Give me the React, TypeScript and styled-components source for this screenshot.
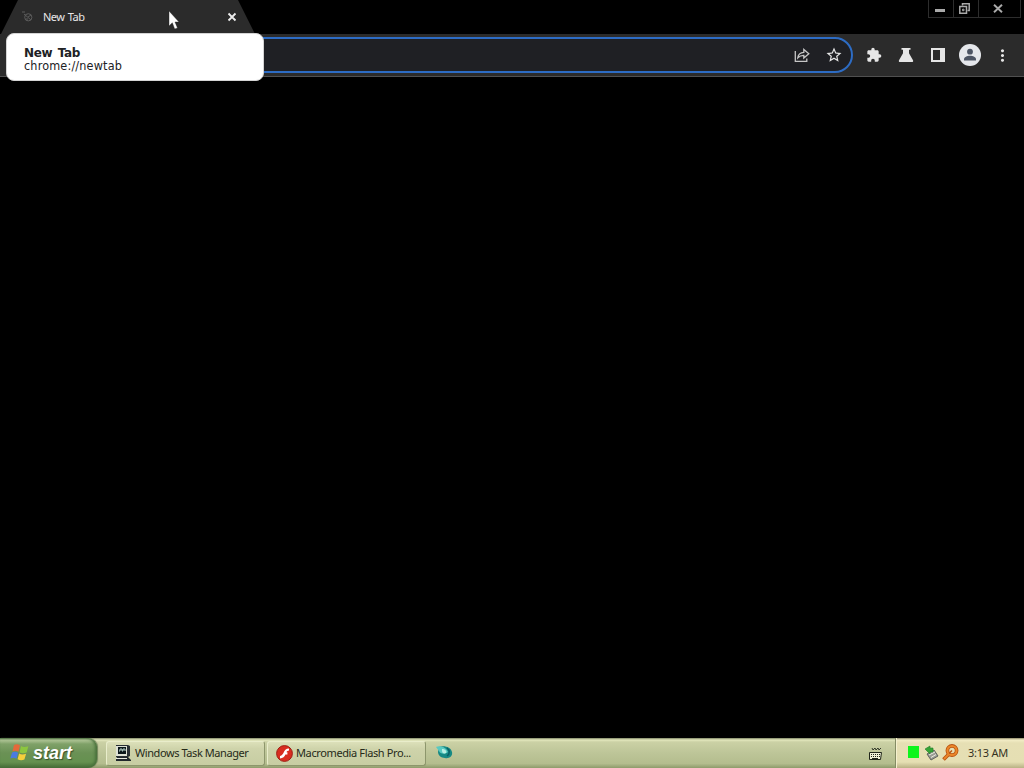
import React from 'react';
import styled, { createGlobalStyle } from 'styled-components';
import { MdExtension, MdMoreVert, MdStarBorder } from 'react-icons/md';

const GlobalStyle = createGlobalStyle`
  body {
    margin: 0;
    background: #000;
    overflow: hidden;
    font-family: 'DejaVu Sans Condensed', 'DejaVu Sans', sans-serif;
  }
`;

const Desktop = styled.div`
  position: relative;
  display: flex;
  flex-direction: column;
  width: 1024px;
  height: 768px;
  background: #000;
`;

const TabStrip = styled.header`
  display: flex;
  justify-content: space-between;
  align-items: flex-start;
  height: 34px;
  flex: none;
`;
const Tab = styled.div`
  display: flex;
  align-items: center;
  box-sizing: border-box;
  width: 255px;
  height: 34px;
  padding: 0 17px 0 21px;
  background: #2b2b2b;
  clip-path: polygon(18px 0, 238px 0, 255px 34px, 1px 34px);
`;
const TabTitle = styled.span`
  flex: 1;
  margin-left: 8px;
  color: #e8e8e8;
  font: 11px/14px 'Noto Sans', sans-serif;
  letter-spacing: -0.5px;
  word-spacing: 1px;
`;

const WindowControls = styled.div`
  display: flex;
  box-sizing: border-box;
  width: 93px;
  height: 18px;
  margin-right: 3px;
  border: 1px solid #2d2d2d;
  border-top: 0;
`;
const WindowButton = styled.div<{ $width: number }>`
  display: flex;
  justify-content: center;
  align-items: center;
  box-sizing: border-box;
  width: ${p => p.$width}px;
  padding-right: 3px;

  & + & {
    border-left: 1px solid #2d2d2d;
  }
`;

const Toolbar = styled.div`
  display: flex;
  align-items: center;
  box-sizing: border-box;
  height: 43px;
  flex: none;
  padding: 0 6px 0 104px;
  background: #2b2b2b;
  border-bottom: 1px solid #505050;
`;
const Omnibox = styled.div`
  display: flex;
  justify-content: flex-end;
  align-items: center;
  box-sizing: border-box;
  flex: 1;
  height: 36px;
  margin-right: 5px;
  padding-right: 1px;
  border: 2px solid #2d6cc4;
  border-radius: 18px;
  background: #1f2024;
`;
const IconButton = styled.div`
  display: flex;
  justify-content: center;
  align-items: center;
  width: 32px;
  height: 32px;
  color: #e6e6e6;
`;

const HoverCard = styled.div`
  position: absolute;
  top: 33px;
  left: 6px;
  box-sizing: border-box;
  width: 258px;
  height: 48px;
  padding: 13px 17px 0;
  border: 1px solid #d4d4d4;
  border-radius: 8px;
  background: #fff;
  color: #202124;
`;
const HoverTitle = styled.div`
  font: bold 12px/13px 'DejaVu Sans', sans-serif;
  letter-spacing: -0.4px;
  word-spacing: 2px;
`;
const HoverUrl = styled.div`
  font-size: 12.5px;
  line-height: 12px;
  letter-spacing: 0.17px;
`;
const Pointer = styled.svg`
  position: absolute;
  top: 10px;
  left: 168px;
`;

const Page = styled.main`
  flex: 1;
`;

const Taskbar = styled.footer`
  display: flex;
  box-sizing: border-box;
  height: 30px;
  flex: none;
  background: linear-gradient(#7f8766 0, #e3e7bd 2px, #cbd1a5 4px, #bdc598 50%, #b4bd8e 85%, #8e9b6b);
`;
const StartButton = styled.div`
  display: flex;
  align-items: center;
  box-sizing: border-box;
  width: 97px;
  height: 30px;
  padding: 0 0 1px 10px;
  border-radius: 0 9px 9px 0;
  background: linear-gradient(#56754a 0, #b0c596 2px, #7fa168 6px, #6a9155 50%, #65914f 80%, #446b36);
  box-shadow: inset -2px 0 3px #48703b, 1px 0 1px #718459;
`;
const StartLabel = styled.span`
  margin-left: 4px;
  color: #fff;
  font: italic bold 18px/20px 'Liberation Sans', sans-serif;
  letter-spacing: 0;
  text-shadow: 1px 1px 1px #36502c;
`;
const TaskList = styled.div`
  display: flex;
  flex: 1;
  align-items: center;
  gap: 2px;
  padding-left: 9px;
`;
const TaskButton = styled.div`
  display: flex;
  align-items: center;
  gap: 3px;
  box-sizing: border-box;
  width: 159px;
  height: 25px;
  margin-top: 1px;
  padding: 0 0 1px 8px;
  border: 1px solid #e9edcb;
  border-right-color: #8d966c;
  border-bottom-color: #8d966c;
  border-radius: 3px;
  background: linear-gradient(#dce0b9, #ced3aa 30%, #c7cda2);
`;
const TaskLabel = styled.span<{ $spacing: number }>`
  color: #262a18;
  font: 11px/14px 'Noto Sans', sans-serif;
  letter-spacing: ${p => p.$spacing}px;
  white-space: nowrap;
`;
const QuickIcon = styled.div`
  display: flex;
  margin-left: 8px;
`;
const LanguageBar = styled.div`
  display: flex;
  align-items: center;
  width: 27px;
  padding-top: 2px;
`;
const Tray = styled.div`
  display: flex;
  align-items: center;
  box-sizing: border-box;
  width: 129px;
  height: 30px;
  padding: 0 0 1px 12px;
  border-left: 1px solid #858c64;
  background: linear-gradient(#8d8968 0, #f2ecc5 2px, #e6dfb4 5px, #e5dfb3 80%, #b8b184);
  box-shadow: inset 1px 0 #f5f1cf;
`;
const StatusLight = styled.div`
  width: 11px;
  height: 12px;
  margin: -1px 5px 0 0;
  background: #0cf51c;
`;
const Clock = styled.span`
  margin-left: 9px;
  color: #35321f;
  font: 11px/14px 'Noto Sans', sans-serif;
  letter-spacing: -0.25px;
  white-space: nowrap;
`;

function TabIcon() {
  return (
    <svg width="14" height="14" viewBox="0 0 14 14" fill="none" stroke="#5c5c5c">
      <path d="M1 2h3M3 4l7 6" />
      <circle cx="7.3" cy="7.3" r="3.6" />
      <path d="M7 7l3-2M6 8v3" />
    </svg>
  );
}

function ShareIcon() {
  return (
    <svg width="16" height="16" viewBox="0 0 16 16" fill="none" stroke="#c6c6c6" strokeWidth="1.3">
      <path d="M1.3 4v10.3h11.5V11.5" />
      <path d="M3.8 10.8c.4-3.4 2.2-5.3 6-5.5V2.5l5 4.3-5 4.2V8.4c-2.7 0-4.4.7-6 2.4z" />
    </svg>
  );
}

function FlaskIcon() {
  return (
    <svg width="16" height="16" viewBox="0 0 16 16" fill="currentColor">
      <path d="M3.5 1h9v1.8H11v3.5l4 6.9c.5.9 0 1.8-1 1.8H2c-1 0-1.5-.9-1-1.8l4-6.9V2.8H3.5z" />
    </svg>
  );
}

function SidePanelIcon() {
  return (
    <svg width="14" height="14" viewBox="0 0 14 14">
      <path fill="#e6e6e6" fillRule="evenodd" d="M0 0h14v14H0zM2 2v10h7V2z" />
    </svg>
  );
}

function ProfileIcon() {
  return (
    <svg width="22" height="22" viewBox="0 0 22 22">
      <circle cx="11" cy="11" r="11" fill="#e5e7eb" />
      <circle cx="11" cy="7.7" r="2.9" fill="#4c5463" />
      <path d="M5 15.5c0-2.5 3-3.7 6-3.7s6 1.2 6 3.7v.9H5z" fill="#4c5463" />
    </svg>
  );
}

function WindowsFlag() {
  return (
    <svg width="19" height="19" viewBox="0 0 19 18">
      <path d="M4 1.5c2-1.2 4-1 6 .3L8.5 8.2c-2-1.1-4-1.2-6-.2z" fill="#e5693a" />
      <path d="M11 2.6c2 1.2 4 1.2 7.4.2L16.6 9c-2.5 1-4.9.9-7.1-.1z" fill="#8cc63f" />
      <path d="M2.1 9c2-1 4-.9 6 .2l-1.6 6c-2-1.2-4-1.2-6.2-.2z" fill="#4a7be0" />
      <path d="M9.1 10c2 1.1 4.2 1.2 7 .2L14.4 16c-2.4 1-4.8.9-6.8-.3z" fill="#f5cf3c" />
    </svg>
  );
}

function ComputerIcon() {
  return (
    <svg width="17" height="17" viewBox="0 0 17 17">
      <path d="M1 0h12l2 1v10l-2 1H1z" fill="#293034" />
      <path d="M1 1h11v10H1z" fill="#dde1d5" />
      <path d="M3 2h8v7H3z" fill="#0b171b" />
      <path d="M4 6h1V4h2v2h1V4h2v2" fill="none" stroke="#b9d4cb" />
      <path d="M2 12h11l3 3v1H1v-2z" fill="#20282c" />
      <path d="M1 13h11v1H1z" fill="#e7e9df" />
    </svg>
  );
}

function FlashIcon() {
  return (
    <svg width="17" height="17" viewBox="0 0 17 17">
      <circle cx="8.5" cy="8.5" r="7.9" fill="#d92d20" stroke="#9e2117" />
      <path d="M13 3.5c-3.2 0-4.5 2-5.2 3.8-.8 1.8-1.7 3.2-3.8 3.7v2.4c3-.2 4.6-2 5.4-4h2V7.2h-1c.6-.9 1.3-1.5 2.6-1.6z" fill="#fff" />
    </svg>
  );
}

function SwirlIcon() {
  return (
    <svg width="18" height="16" viewBox="0 0 18 16">
      <path d="M3 2c5-2 12 0 13 5 1 4-3 7-7 6C5 13 2 10 2 7z" fill="#168984" />
      <path d="M0 2c4-2 10 0 12 5-3 3-8 2-9-1z" fill="#58c9c1" />
      <path d="M6 4c3 0 5 2 4 4-2 1-4 0-4-2z" fill="#b8eee2" />
      <path d="M11 3c3 2 3 6 0 8" fill="none" stroke="#075f68" strokeWidth="1.5" />
    </svg>
  );
}

function KeyboardIcon() {
  return (
    <svg width="15" height="14" viewBox="0 0 15 14">
      <path d="M4 1l1 2 2-2 1 2 2-2 1 2 2-2" fill="none" stroke="#33392a" />
      <path d="M1.5 5.5h12l-1 7h-11z" fill="#eff0d7" stroke="#20251a" />
      <path d="M3 7.5h9M3 9.5h9" stroke="#20251a" strokeDasharray="1 1" />
      <path d="M4 11.5h6" stroke="#20251a" />
    </svg>
  );
}

function DeviceIcon() {
  return (
    <svg width="15" height="16" viewBox="0 0 15 16">
      <path d="M3 9l7-4 4 6-7 4z" fill="#9b9c96" stroke="#5f625d" />
      <path d="M5 10l6-3M7 12.5l5-3" stroke="#ececdf" />
      <path d="M1 4l5-3v2h3v4H6v2z" fill="#35a536" stroke="#247c2a" strokeWidth=".6" />
    </svg>
  );
}

const KeySvg = styled.svg`
  margin-left: 3px;
`;

function KeyIcon() {
  return (
    <KeySvg width="17" height="17" viewBox="0 0 17 17" fill="none">
      <circle cx="10" cy="6.5" r="4.6" stroke="#b85312" strokeWidth="3.7" />
      <path d="M6.5 10.5l-5 5" stroke="#b85312" strokeWidth="3.7" />
      <circle cx="10" cy="6.5" r="4.6" stroke="#ec8729" strokeWidth="2" />
      <path d="M6.5 10.5L2 15" stroke="#ec8729" strokeWidth="1.8" />
      <path d="M10 6.5l-3 3" stroke="#b85312" strokeWidth="1.5" />
    </KeySvg>
  );
}

export default function App() {
  return (
    <>
      <GlobalStyle />
      <Desktop>
        <TabStrip>
          <Tab>
            <TabIcon />
            <TabTitle>New Tab</TabTitle>
            <svg width="13" height="10" viewBox="0 0 13 10" stroke="#eee" strokeWidth="1.8">
              <path d="M3.5 1.5l7 7M10.5 1.5l-7 7" />
            </svg>
          </Tab>
          <WindowControls>
            <WindowButton $width={24}>
              <svg width="10" height="10" viewBox="0 0 10 10">
                <path d="M0 5h10v3H0z" fill="#aaa" />
              </svg>
            </WindowButton>
            <WindowButton $width={25}>
              <svg width="11" height="11" viewBox="0 0 11 11" fill="none" stroke="#aaa" strokeWidth="1.5">
                <path d="M3.5 2.5V.8h6.7v6.7H8.5" />
                <path d="M.8 3.5h6.7v6.7H.8z" />
                <path d="M3.5 6.2H5v1.5H3.5z" strokeWidth="1" />
              </svg>
            </WindowButton>
            <WindowButton $width={42}>
              <svg width="10" height="9" viewBox="0 0 10 9" stroke="#aaa" strokeWidth="1.9">
                <path d="M1 .7l8 7.6M9 .7L1 8.3" />
              </svg>
            </WindowButton>
          </WindowControls>
        </TabStrip>

        <Toolbar>
          <Omnibox>
            <IconButton><ShareIcon /></IconButton>
            <IconButton><MdStarBorder size={18} /></IconButton>
          </Omnibox>
          <IconButton><MdExtension size={16} /></IconButton>
          <IconButton><FlaskIcon /></IconButton>
          <IconButton><SidePanelIcon /></IconButton>
          <IconButton><ProfileIcon /></IconButton>
          <IconButton><MdMoreVert size={19} /></IconButton>
        </Toolbar>

        <Page />

        <Taskbar>
          <StartButton>
            <WindowsFlag />
            <StartLabel>start</StartLabel>
          </StartButton>
          <TaskList>
            <TaskButton>
              <ComputerIcon />
              <TaskLabel $spacing={-0.42}>Windows Task Manager</TaskLabel>
            </TaskButton>
            <TaskButton>
              <FlashIcon />
              <TaskLabel $spacing={-0.38}>Macromedia Flash Pro...</TaskLabel>
            </TaskButton>
            <QuickIcon><SwirlIcon /></QuickIcon>
          </TaskList>
          <LanguageBar><KeyboardIcon /></LanguageBar>
          <Tray>
            <StatusLight />
            <DeviceIcon />
            <KeyIcon />
            <Clock>3:13 AM</Clock>
          </Tray>
        </Taskbar>

        <HoverCard>
          <HoverTitle>New Tab</HoverTitle>
          <HoverUrl>chrome://newtab</HoverUrl>
        </HoverCard>
        <Pointer width="12" height="20" viewBox="0 0 12 20">
          <path d="M1 1v15l3.3-3.2L6.7 19l2.8-1.1L7 12h4z" fill="#fff" stroke="#222" strokeWidth=".4" />
        </Pointer>
      </Desktop>
    </>
  );
}
